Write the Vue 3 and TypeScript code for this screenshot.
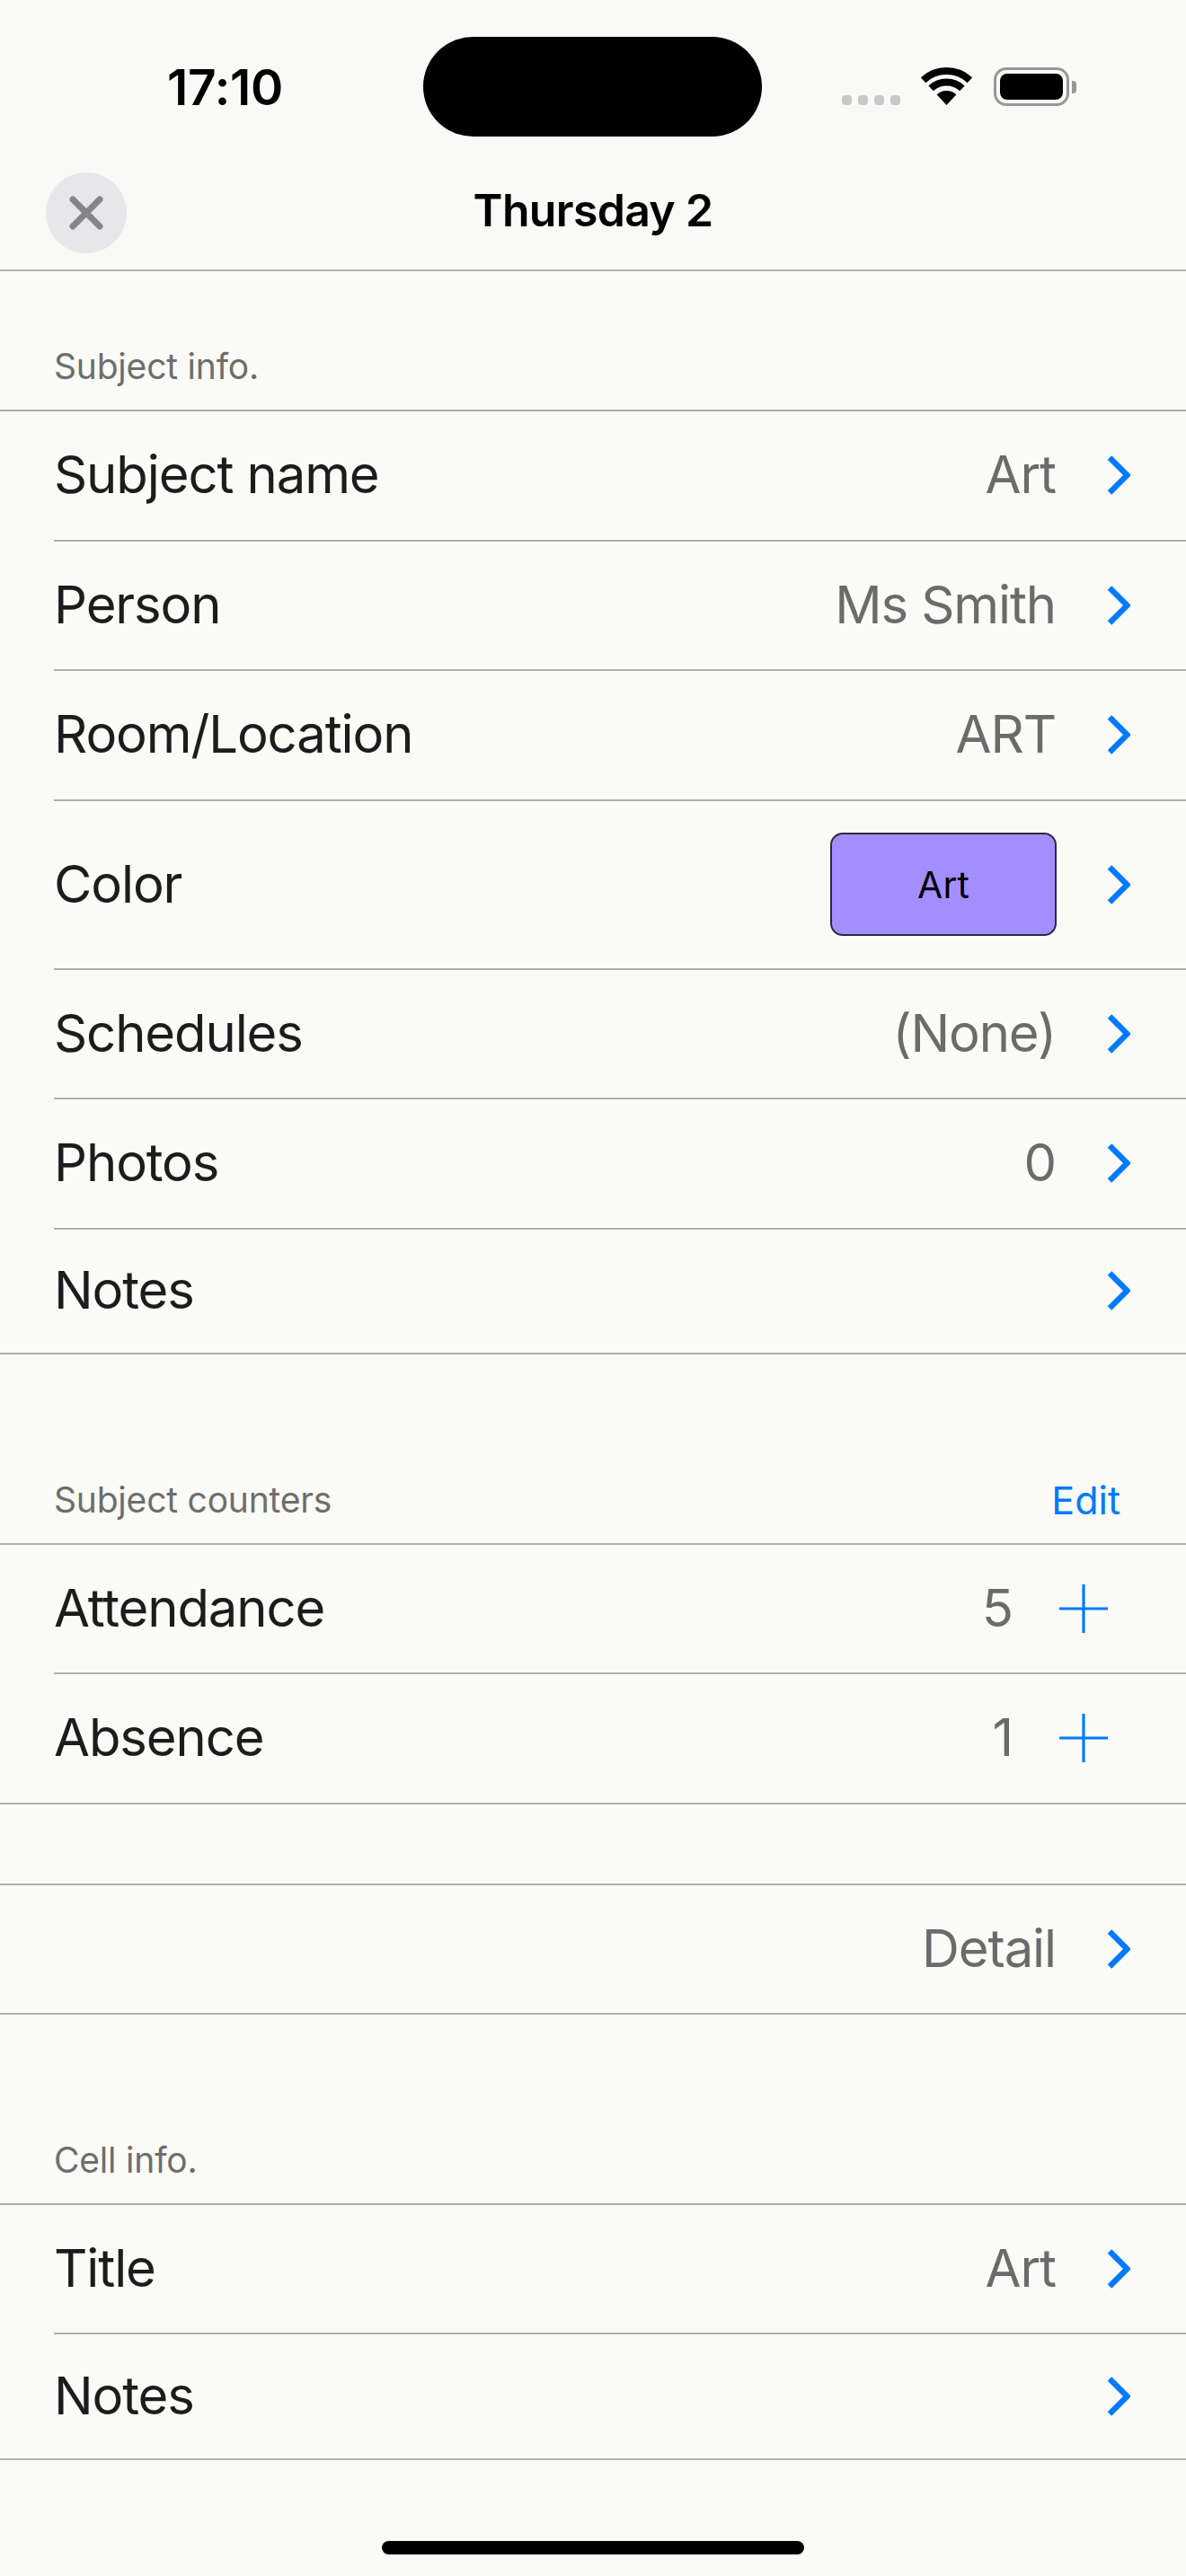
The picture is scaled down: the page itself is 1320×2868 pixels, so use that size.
<template>
<div class="screen">
    <header class="top">
        <div class="status">
            <div class="time">17:10</div>
            <div class="island"></div>
            <div class="status-icons">
                <div class="dots"><i></i><i></i><i></i><i></i></div>
                <svg class="wifi" width="57" height="42" viewBox="0 0 57 42">
                    <path d="M28.5 42 17.6 30.3A16 16 0 0 1 39.4 30.3Z" fill="#000" />
                    <path d="M11.1 23.4A25.5 25.5 0 0 1 45.9 23.4" fill="none" stroke="#000" stroke-width="8" />
                    <path d="M2.6 14.2A38 38 0 0 1 54.4 14.2" fill="none" stroke="#000" stroke-width="8" />
                </svg>
                <div class="battery"><div class="battery-fill"></div></div>
                <div class="battery-nub"></div>
            </div>
        </div>
        <div class="nav">
            <div class="close">
                <svg width="38" height="38" viewBox="0 0 38 38">
                    <path d="M4 4 34 34M34 4 4 34" stroke="#85858a" stroke-width="7" stroke-linecap="round" />
                </svg>
            </div>
            <div class="nav-title">Thursday 2</div>
        </div>
    </header>

    <template v-for="section in sections" :key="section.id">
        <div class="section-head" :class="section.headClass">
            <span v-if="section.title">{{ section.title }}</span>
            <span v-if="section.action" class="section-action">{{ section.action }}</span>
        </div>
        <div class="group">
            <div class="row" v-for="row in section.rows" :key="row.label + section.id">
                <div class="row-inner" :class="row.size">
                    <span class="label">{{ row.label }}</span>
                    <div class="tag" v-if="row.tag">{{ row.tag }}</div>
                    <span class="value" :class="{ counter: row.plus }" v-else-if="row.value">{{ row.value }}</span>
                    <svg v-if="row.plus" class="plus" width="54" height="54" viewBox="0 0 54 54">
                        <path d="M0 27H54M27 0V54" stroke="#007aff" stroke-width="3.2" />
                    </svg>
                    <svg v-else class="chevron" width="26" height="44" viewBox="0 0 26 44">
                        <path d="M3 2.5 22.5 22 3 41.5" fill="none" stroke="#007aff" stroke-width="6.4" />
                    </svg>
                </div>
            </div>
        </div>
    </template>

    <div class="home-bar"></div>
</div>
</template>

<script setup lang="ts">
interface Row {
    label: string
    value?: string
    tag?: string
    plus?: boolean
    size?: string
}

const sections: { id: number; title?: string; action?: string; headClass: string; rows: Row[] }[] = [
    {
        id: 1,
        title: 'Subject info.',
        headClass: 'head-first',
        rows: [
            { label: 'Subject name', value: 'Art' },
            { label: 'Person', value: 'Ms Smith' },
            { label: 'Room/Location', value: 'ART' },
            { label: 'Color', tag: 'Art', size: 'tall' },
            { label: 'Schedules', value: '(None)' },
            { label: 'Photos', value: '0' },
            { label: 'Notes', size: 'last' }
        ]
    },
    {
        id: 2,
        title: 'Subject counters',
        action: 'Edit',
        headClass: 'head-big',
        rows: [
            { label: 'Attendance', value: '5', plus: true },
            { label: 'Absence', value: '1', plus: true }
        ]
    },
    {
        id: 3,
        headClass: 'head-gap',
        rows: [{ label: '', value: 'Detail' }]
    },
    {
        id: 4,
        title: 'Cell info.',
        headClass: 'head-big',
        rows: [
            { label: 'Title', value: 'Art' },
            { label: 'Notes', size: 'last' }
        ]
    }
]
</script>

<style>
body {
    background: #fafbf6;
}
</style>

<style scoped>
.screen {
    width: 1320px;
    height: 2868px;
    background: #fafbf6;
    display: flex;
    flex-direction: column;
    font-family: Inter, "Liberation Sans", sans-serif;
    color: #1c1c1c;
    overflow: hidden;
}

.top {
    height: 302px;
    flex-shrink: 0;
    box-sizing: border-box;
    background: #f9f9f8;
    border-bottom: 2px solid #b0b0ab;
}

.status {
    height: 192px;
    display: flex;
    align-items: flex-start;
}

.time {
    width: 471px;
    box-sizing: border-box;
    padding-left: 186px;
    margin-top: 64px;
    font-size: 55px;
    line-height: 66px;
    font-weight: 600;
    letter-spacing: -0.2px;
    color: #000;
}

.island {
    width: 377px;
    height: 111px;
    margin-top: 41px;
    border-radius: 56px;
    background: #000;
}

.status-icons {
    margin-left: 89px;
    margin-top: 75px;
    display: flex;
    align-items: flex-end;
    height: 43px;
}

.dots {
    display: flex;
    gap: 7px;
    width: 65px;
    padding-bottom: 1px;
}

.dots i {
    width: 11px;
    height: 11px;
    border-radius: 4px;
    background: #c8c8c8;
}

.wifi {
    margin-left: 23px;
    margin-bottom: 1px;
}

.battery {
    margin-left: 24px;
    width: 84px;
    height: 43px;
    box-sizing: border-box;
    border: 3px solid #979797;
    border-radius: 14px;
    padding: 4px;
}

.battery-fill {
    height: 100%;
    border-radius: 8px;
    background: #000;
}

.battery-nub {
    width: 5px;
    height: 14px;
    margin: 0 0 14px 3px;
    border-radius: 0 4px 4px 0;
    background: #979797;
}

.nav {
    display: grid;
    grid-template-columns: 1fr auto 1fr;
    align-items: center;
    height: 90px;
    padding: 0 51px;
}

.close {
    width: 90px;
    height: 90px;
    border-radius: 50%;
    background: #e7e7e9;
    display: flex;
    align-items: center;
    justify-content: center;
}

.nav-title {
    font-size: 50px;
    line-height: 60px;
    margin-top: -6px;
    font-weight: 600;
    letter-spacing: -0.7px;
    color: #000;
}

.section-head {
    flex-shrink: 0;
    display: flex;
    justify-content: space-between;
    align-items: flex-end;
    box-sizing: border-box;
    padding: 0 73px 24px 60px;
    font-size: 39px;
    line-height: 48px;
    letter-spacing: -0.2px;
    color: #6d6d6d;
}

.head-first {
    height: 154px;
}

.head-big {
    height: 209.5px;
}

.head-gap {
    height: 88px;
}

.section-action {
    color: #007aff;
    font-size: 43px;
    letter-spacing: 0;
}

.group {
    flex-shrink: 0;
    border-top: 2px solid #b0b0ab;
    border-bottom: 2px solid #b0b0ab;
}

.row {
    padding-left: 60px;
}

.row-inner {
    height: 144.5px;
    box-sizing: border-box;
    display: flex;
    align-items: center;
    padding-right: 62px;
    font-size: 58px;
    letter-spacing: -1.1px;
    border-bottom: 2px solid #b0b0ab;
}

.row:last-child .row-inner {
    height: 142.5px;
    border-bottom: none;
}

.row-inner.tall {
    height: 188px;
}

.row:last-child .row-inner.last {
    height: 137.5px;
}

.label {
    flex: 1;
    line-height: 72px;
    margin-top: -2px;
}

.value {
    color: #6b6b6b;
    line-height: 72px;
    margin-top: -2px;
    margin-right: 57px;
}

.value.counter {
    margin-right: 52px;
}

.tag {
    width: 252px;
    height: 115px;
    box-sizing: border-box;
    margin-right: 56px;
    margin-top: 0;
    border: 2px solid #2c2a40;
    border-radius: 14px;
    background: #a48eff;
    color: #000;
    font-size: 41px;
    letter-spacing: 0;
    display: flex;
    align-items: center;
    justify-content: center;
}

.plus {
    margin-right: 25px;
}

.home-bar {
    width: 470px;
    height: 15px;
    flex-shrink: 0;
    border-radius: 8px;
    margin: auto auto 24px;
    background: #000;
}
</style>
